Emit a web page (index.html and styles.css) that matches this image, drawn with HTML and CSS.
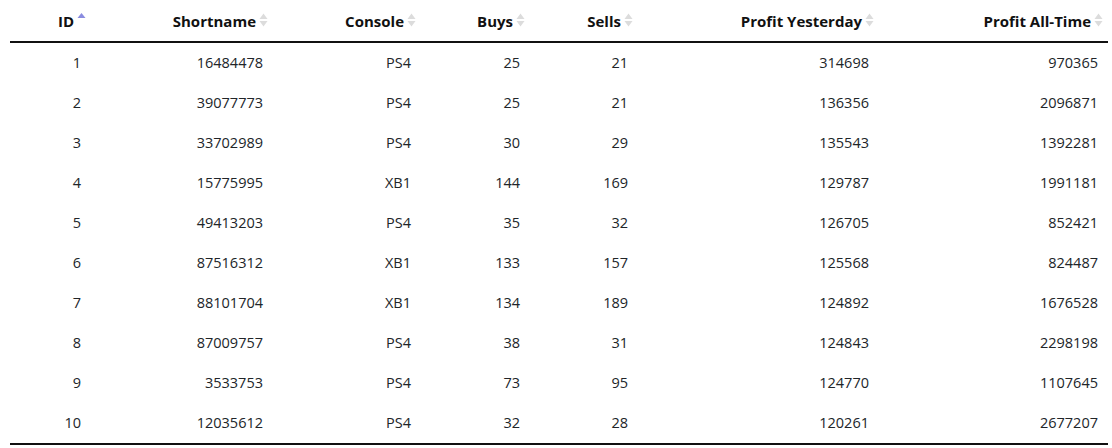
FILE: index.html
```html
<!DOCTYPE html>
<html>
<head>
<meta charset="utf-8">
<link rel="stylesheet" href="styles.css">
</head>
<body>
<table class="grid">
  <colgroup>
    <col class="c1"><col class="c2"><col class="c3"><col class="c4"><col class="c5"><col class="c6"><col class="c7">
  </colgroup>
  <thead>
    <tr>
      <th><div class="hd"><span>ID</span><svg class="sort" width="9" height="16" viewBox="0 0 9 16"><polygon points="0.5,6 4.5,1 8.5,6" fill="#8a8ce0"/></svg></div></th>
      <th><div class="hd"><span>Shortname</span><svg class="sort" width="9" height="16" viewBox="0 0 9 16"><polygon points="0.5,7 4.5,1.5 8.5,7" fill="#dcdcdc"/><polygon points="0.5,9 4.5,14.5 8.5,9" fill="#dcdcdc"/></svg></div></th>
      <th><div class="hd"><span>Console</span><svg class="sort" width="9" height="16" viewBox="0 0 9 16"><polygon points="0.5,7 4.5,1.5 8.5,7" fill="#dcdcdc"/><polygon points="0.5,9 4.5,14.5 8.5,9" fill="#dcdcdc"/></svg></div></th>
      <th><div class="hd"><span>Buys</span><svg class="sort" width="9" height="16" viewBox="0 0 9 16"><polygon points="0.5,7 4.5,1.5 8.5,7" fill="#dcdcdc"/><polygon points="0.5,9 4.5,14.5 8.5,9" fill="#dcdcdc"/></svg></div></th>
      <th><div class="hd"><span>Sells</span><svg class="sort" width="9" height="16" viewBox="0 0 9 16"><polygon points="0.5,7 4.5,1.5 8.5,7" fill="#dcdcdc"/><polygon points="0.5,9 4.5,14.5 8.5,9" fill="#dcdcdc"/></svg></div></th>
      <th><div class="hd"><span>Profit Yesterday</span><svg class="sort" width="9" height="16" viewBox="0 0 9 16"><polygon points="0.5,7 4.5,1.5 8.5,7" fill="#dcdcdc"/><polygon points="0.5,9 4.5,14.5 8.5,9" fill="#dcdcdc"/></svg></div></th>
      <th><div class="hd"><span>Profit All-Time</span><svg class="sort" width="9" height="16" viewBox="0 0 9 16"><polygon points="0.5,7 4.5,1.5 8.5,7" fill="#dcdcdc"/><polygon points="0.5,9 4.5,14.5 8.5,9" fill="#dcdcdc"/></svg></div></th>
    </tr>
  </thead>
  <tbody>
    <tr><td>1</td><td>16484478</td><td>PS4</td><td>25</td><td>21</td><td>314698</td><td>970365</td></tr>
    <tr><td>2</td><td>39077773</td><td>PS4</td><td>25</td><td>21</td><td>136356</td><td>2096871</td></tr>
    <tr><td>3</td><td>33702989</td><td>PS4</td><td>30</td><td>29</td><td>135543</td><td>1392281</td></tr>
    <tr><td>4</td><td>15775995</td><td>XB1</td><td>144</td><td>169</td><td>129787</td><td>1991181</td></tr>
    <tr><td>5</td><td>49413203</td><td>PS4</td><td>35</td><td>32</td><td>126705</td><td>852421</td></tr>
    <tr><td>6</td><td>87516312</td><td>XB1</td><td>133</td><td>157</td><td>125568</td><td>824487</td></tr>
    <tr><td>7</td><td>88101704</td><td>XB1</td><td>134</td><td>189</td><td>124892</td><td>1676528</td></tr>
    <tr><td>8</td><td>87009757</td><td>PS4</td><td>38</td><td>31</td><td>124843</td><td>2298198</td></tr>
    <tr><td>9</td><td>3533753</td><td>PS4</td><td>73</td><td>95</td><td>124770</td><td>1107645</td></tr>
    <tr><td>10</td><td>12035612</td><td>PS4</td><td>32</td><td>28</td><td>120261</td><td>2677207</td></tr>
  </tbody>
</table>
</body>
</html>
```
FILE: styles.css
```css
html, body {
  margin: 0;
  padding: 0;
  background: #ffffff;
}
body {
  font-family: "Open Sans", "Noto Sans", "Liberation Sans", sans-serif;
  color: #212529;
}
.grid {
  margin-left: 10px;
  width: 1098px;
  table-layout: fixed;
  border-collapse: collapse;
  border-spacing: 0;
}
.c1 { width: 81px; }
.c2 { width: 182px; }
.c3 { width: 148px; }
.c4 { width: 109px; }
.c5 { width: 108px; }
.c6 { width: 241px; }
.c7 { width: 229px; }
.grid th {
  height: 41px;
  padding: 0 5px 0 0;
  border-bottom: 2px solid #111;
  font-size: 15px;
  font-weight: 700;
  color: #111;
  vertical-align: middle;
}
.hd {
  display: flex;
  justify-content: flex-end;
  align-items: center;
  gap: 3px;
}
.sort {
  display: block;
  margin-top: -2px;
}
.grid td {
  height: 40px;
  padding: 0 10px 0 0;
  text-align: right;
  font-size: 14.5px;
  line-height: 20px;
  vertical-align: middle;
}
.grid tbody tr:last-child td {
  border-bottom: 2px solid #111;
}
```
